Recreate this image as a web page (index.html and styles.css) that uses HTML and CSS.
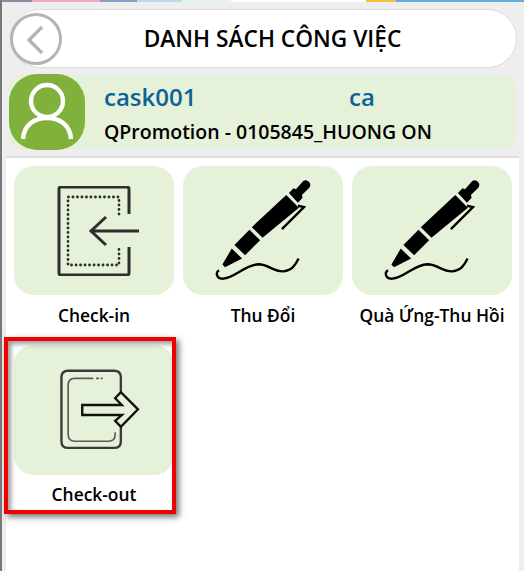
FILE: index.html
```html
<!DOCTYPE html>
<html lang="vi">
<head>
  <meta charset="UTF-8">
  <title>Danh sách công việc</title>
  <link rel="stylesheet" href="styles.css">
</head>
<body>

  <div class="strip">
    <span class="s1"></span><span class="s2"></span><span class="s3"></span><span class="s4"></span><span class="s5"></span><span class="s6"></span><span class="s7"></span><span class="s8"></span>
  </div>

  <div class="page">
    <div class="header">
      <button class="back-btn" aria-label="Quay lại">
        <svg width="52" height="52" viewBox="0 0 52 52">
          <circle cx="26" cy="26" r="24.5" fill="#fff" stroke="#b4b4b4" stroke-width="3"/>
          <path d="M32 14 L19 27 L32 40" fill="none" stroke="#b4b4b4" stroke-width="3.4"/>
        </svg>
      </button>
      <h1>DANH SÁCH CÔNG VIỆC</h1>
    </div>

    <div class="user">
      <div class="avatar">
        <svg width="76" height="76" viewBox="0 0 76 76">
          <circle cx="38" cy="27" r="16" fill="none" stroke="#fff" stroke-width="4.4"/>
          <path d="M14 65 C15 51 25 44 38 44 C51 44 61 51 62 65" fill="none" stroke="#fff" stroke-width="4.4"/>
        </svg>
      </div>
      <div class="user-info">
        <div class="user-top">
          <span class="user-name">cask001</span>
          <span class="user-ca">ca</span>
        </div>
        <div class="user-shop">QPromotion - 0105845_HUONG ON</div>
      </div>
    </div>

    <div class="content">
      <div class="grid">
        <div class="item">
          <div class="tile">
            <svg width="90" height="90" viewBox="0 0 90 90">
              <path d="M80 28 V3 Q80 1 78 1 H12 Q10 1 10 3 V87 Q10 89 12 89 H78 Q80 89 80 87 V61" fill="none" stroke="#2e2e2e" stroke-width="3"/>
              <path d="M70 28 V11 H19 V79 H70 V61" fill="none" stroke="#2e2e2e" stroke-width="2.8" stroke-linecap="round" stroke-dasharray="0.1 4.4"/>
              <path d="M90 45 H41 M57 31 L42 45 L57 59" fill="none" stroke="#2e2e2e" stroke-width="3"/>
            </svg>
          </div>
          <div class="label">Check-in</div>
        </div>

        <div class="item">
          <div class="tile">
            <svg width="107" height="107" viewBox="95 66 320 320"><use href="#pen-icon"/></svg>
          </div>
          <div class="label">Thu Đổi</div>
        </div>

        <div class="item">
          <div class="tile">
            <svg width="107" height="107" viewBox="95 66 320 320"><use href="#pen-icon"/></svg>
          </div>
          <div class="label">Quà Ứng-Thu Hồi</div>
        </div>

        <div class="item">
          <div class="tile tile-tall">
            <svg width="94" height="94" viewBox="142 100 280 280">
              <path d="M362 188 V143 Q362 123 342 123 H205 Q185 123 185 143 V333 Q185 353 205 353 H342 Q362 353 362 333 V290" fill="none" stroke="#3a3a3a" stroke-width="7"/>
              <path d="M280 146 H225 Q205 146 205 166 V313 Q205 333 225 333 H325 Q345 333 345 313 V306 M288 146 H297 M302 146 H308" fill="none" stroke="#5c5c5c" stroke-width="5"/>
              <path d="M247 225 H365 L345 205 L362 187 L413 238 L362 290 L345 272 L365 255 H247 Z" fill="none" stroke="#111" stroke-width="7"/>
            </svg>
          </div>
          <div class="label">Check-out</div>
        </div>
      </div>
    </div>
  </div>

  <!-- khung do danh dau -->
  <div class="mark"></div>

  <svg class="defs" width="0" height="0">
    <defs>
      <g id="pen-icon">
        <path d="M331 114 L345 100 L352 103 L374 78 Q384 72 392 82 Q398 90 392 98 L370 120 L372 128 L358 143 Z" fill="#000"/>
        <path d="M323 120 L361 158 L252 248 L220 216 Z" fill="#000"/>
        <path d="M213 224 L245 255 L200 300 L168 269 Z" fill="#000"/>
        <path d="M160 280 L191 310 L140 336 L132 328 Z" fill="#000"/>
        <path d="M358 152 L376 156 L310 222" fill="none" stroke="#000" stroke-width="7"/>
        <path d="M122 345 C110 352 115 372 135 370 C170 368 200 328 240 327 C270 327 285 350 315 348 C340 346 350 330 360 310" fill="none" stroke="#000" stroke-width="7"/>
      </g>
    </defs>
  </svg>

</body>
</html>
```

FILE: styles.css
```css
* { box-sizing: border-box; }

html, body {
  height: 100%;
}

body {
  margin: 0;
  position: relative;
  overflow: hidden;
  background: #eeeeee;
  font-family: 'Open Sans', sans-serif;
  color: #000;
  border-left: 2px solid #777;
}

.strip {
  display: flex;
  height: 2px;
  margin-left: -2px;
  background: #fff;
}

.strip span { display: block; height: 100%; }
.s1 { width: 32px; background: #8d8ba0; }
.s2 { width: 68px; background: #f0a9c0; }
.s3 { width: 37px; background: #8d9cc4; }
.s4 { width: 45px; background: #b7dde6; }
.s5 { width: 49px; background: #e4f3f6; }
.s6 { width: 135px; background: #fff; }
.s7 { width: 30px; background: #f6bd3f; }
.s8 { width: 128px; background: #69aed6; }

.page {
  display: flex;
  flex-direction: column;
  height: 569px;
  padding: 7px 0 0 4px;
}

.header {
  display: flex;
  align-items: center;
  height: 59px;
  margin: 0 7px 0 4px;
  background: #fff;
  border: 1px solid #dcdcdc;
  border-radius: 30px;
}

.back-btn {
  flex: none;
  width: 52px;
  height: 52px;
  margin-left: -1px;
  padding: 0;
  border: none;
  background: none;
}

.back-btn svg { display: block; }

h1 {
  flex: 1;
  margin: 0;
  padding: 1px 33px 0 0;
  text-align: center;
  font-size: 22.7px;
  font-weight: 600;
  line-height: 1;
}

.user {
  display: flex;
  height: 74px;
  margin: 7px 9px 0 3px;
  background: #e6f1d9;
  border-radius: 10px;
}

.avatar {
  flex: none;
  width: 76px;
  height: 76px;
  margin-top: -1px;
  background: #80b13a;
  border-radius: 28px;
}

.avatar svg { display: block; }

.user-info {
  flex: 1;
  padding: 4px 0 0 19px;
}

.user-top {
  display: flex;
  height: 34px;
  align-items: center;
  font-size: 24px;
  font-weight: 600;
  color: #0a6496;
}

.user-name { width: 245px; }

.user-shop {
  margin-top: 7px;
  font-size: 19.5px;
  font-weight: 600;
  line-height: 24px;
}

.content {
  flex: 1;
  margin: 7px 5px 0 0;
  background: #fff;
  border-top: 2px solid #dedede;
  padding: 8px 8px 0 8px;
}

.grid {
  display: grid;
  grid-template-columns: repeat(3, 160px);
  column-gap: 9px;
  row-gap: 8px;
}

.item { height: 171px; }

.tile {
  display: flex;
  align-items: center;
  justify-content: center;
  height: 129px;
  background: #e6f1d9;
  border-radius: 20px;
}

.tile-tall { height: 130px; }

.label {
  margin-top: 9px;
  text-align: center;
  font-size: 17.4px;
  font-weight: 600;
  line-height: 23px;
  white-space: nowrap;
}

.tile-tall + .label { margin-top: 8px; }

.mark {
  position: absolute;
  left: 2px;
  top: 337px;
  width: 172px;
  height: 177px;
  border: 4px solid #f00000;
  box-shadow: 3px 3px 6px rgba(0, 0, 0, 0.55), inset 3px 3px 5px rgba(0, 0, 0, 0.4);
}

.defs { position: absolute; }
```
